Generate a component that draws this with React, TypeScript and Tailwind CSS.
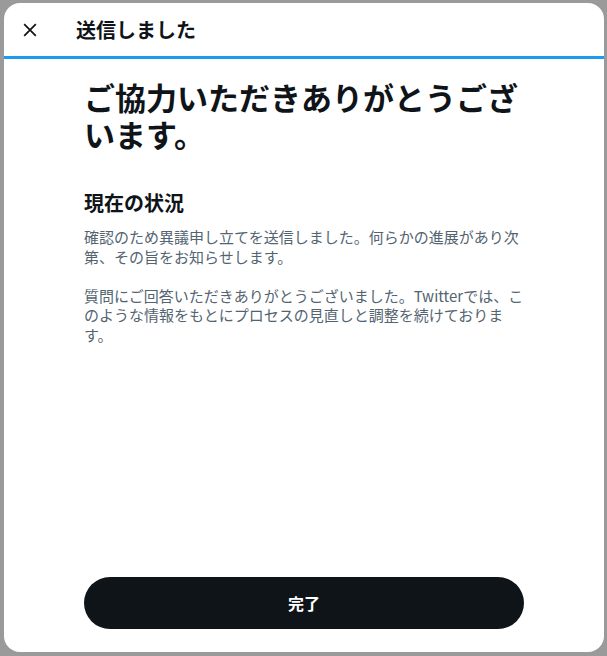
export default function App() {
  return (
    <div
      className="min-h-screen w-full bg-[#9a9a9a] pt-[3px] pl-[4px] pr-[3px] pb-[4px] flex"
      style={{ fontFamily: '"Noto Sans CJK JP", "Noto Sans", sans-serif' }}
    >
      <div className="flex-1 bg-white rounded-2xl flex flex-col overflow-hidden">
        <header className="h-[53px] flex items-center pl-[8px] pr-4 shrink-0">
          <button type="button" className="w-[36px] h-[36px] flex items-center justify-center text-[#0f1419]">
            <svg viewBox="0 0 24 24" className="w-[14px] h-[14px]" fill="none" stroke="currentColor" strokeWidth="3" strokeLinecap="butt">
              <path d="M2 2L22 22M22 2L2 22" />
            </svg>
          </button>
          <h1 className="ml-[28px] text-[20px] font-bold text-[#0f1419] leading-6">送信しました</h1>
        </header>
        <div className="h-[3px] bg-[#1d9bf0] shrink-0" />
        <main className="flex-1 flex flex-col px-[80px] pt-[19px] pb-[23px]">
          <h2 className="text-[31px] font-bold text-[#0f1419] leading-[37px]">
            ご協力いただきありがとうございます。
          </h2>
          <h3 className="mt-[39px] text-[20px] font-bold text-[#0f1419] leading-6">現在の状況</h3>
          <div className="mt-[12px] text-[15px] text-[#536471] leading-[19.5px]">
            <p>確認のため異議申し立てを送信しました。何らかの進展があり次第、その旨をお知らせします。</p>
            <p className="mt-[19.5px]">
              質問にご回答いただきありがとうございました。Twitterでは、このような情報をもとにプロセスの見直しと調整を続けております。
            </p>
          </div>
          <div className="flex-1" />
          <button
            type="button"
            className="h-[52px] w-full rounded-full bg-[#0f1419] text-white text-[16px] font-bold"
          >
            完了
          </button>
        </main>
      </div>
    </div>
  );
}
